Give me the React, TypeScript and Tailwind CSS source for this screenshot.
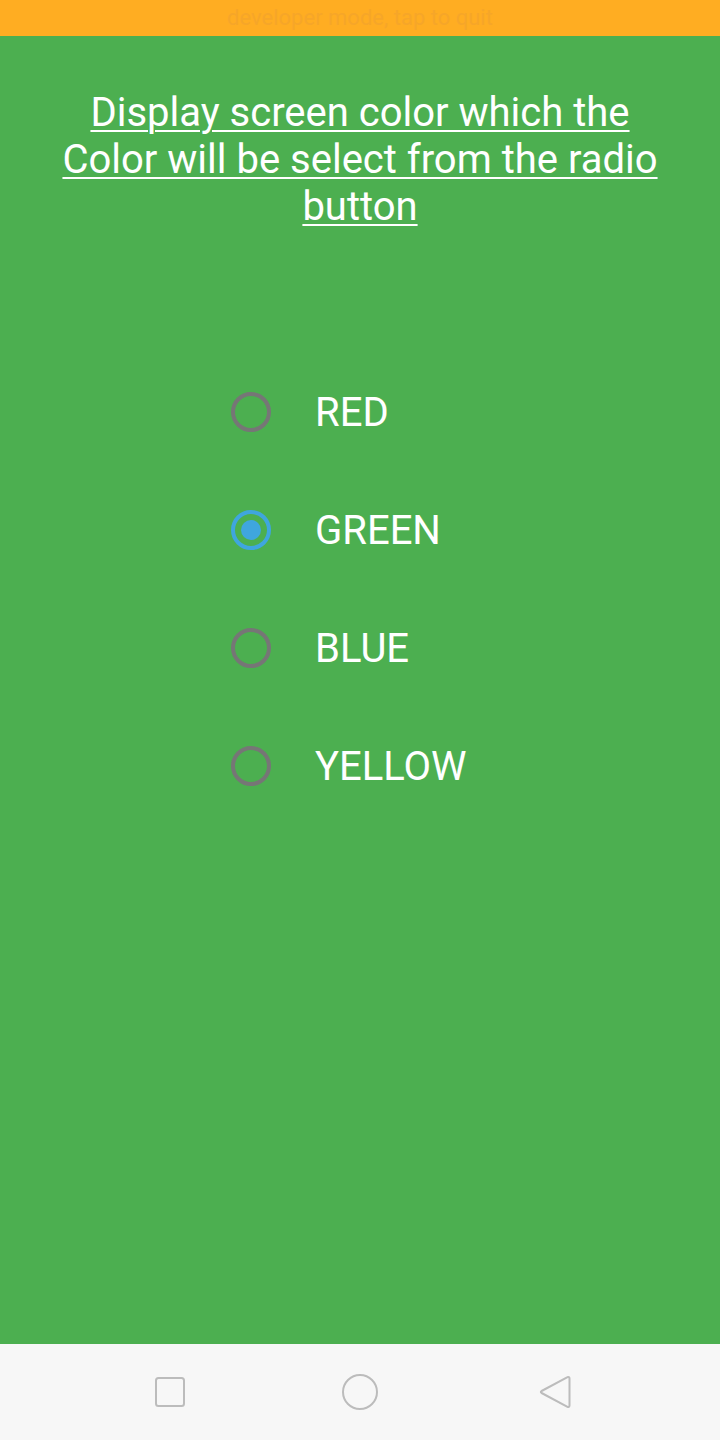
import { useState } from 'react'

const colors = ['RED', 'GREEN', 'BLUE', 'YELLOW']

export default function App() {
  const [selected, setSelected] = useState('GREEN')

  return (
    <div className="flex flex-col w-[720px] h-[1440px] bg-[#4caf50] font-['Roboto',sans-serif]">
      {/* Developer mode banner */}
      <div className="flex items-center justify-center h-[36px] bg-[#ffad22] text-[22px] leading-none text-[#f6a629]">
        developer mode, tap to quit
      </div>

      {/* Content */}
      <div className="flex-1 flex flex-col">
        <h1 className="mt-[53px] px-[40px] text-center text-[40px] leading-[47px] font-normal text-white underline decoration-2 underline-offset-[4px]">
          Display screen color which the Color will be select from the radio button
        </h1>

        <div className="mt-[123px] flex flex-col pl-[231px]">
          {colors.map((c) => (
            <button
              key={c}
              onClick={() => setSelected(c)}
              className="flex items-center h-[118px] text-left"
            >
              <span
                className={`flex items-center justify-center w-[40px] h-[40px] rounded-full border-[4px] ${
                  selected === c ? 'border-[#3fa6de]' : 'border-[#767676]'
                }`}
              >
                {selected === c && (
                  <span className="w-[20px] h-[20px] rounded-full bg-[#3fa6de]" />
                )}
              </span>
              <span className="ml-[44px] text-[40px] leading-[47px] text-white">{c}</span>
            </button>
          ))}
        </div>
      </div>

      {/* Navigation bar */}
      <div className="flex items-center h-[96px] bg-[#f7f7f7] pl-[155px]">
        <svg width="30" height="30" viewBox="0 0 30 30" fill="none">
          <rect x="1" y="1" width="28" height="28" rx="2.5" stroke="#bcbcbc" strokeWidth="2" />
        </svg>
        <svg className="ml-[157px]" width="36" height="36" viewBox="0 0 36 36" fill="none">
          <circle cx="18" cy="18" r="17" stroke="#bcbcbc" strokeWidth="2" />
        </svg>
        <svg className="ml-[161px]" width="32" height="36" viewBox="0 0 32 36" fill="none">
          <path
            d="M28.5 3.2 C29.5 2.6 30.5 3.2 30.5 4.4 L30.5 31.6 C30.5 32.8 29.5 33.4 28.5 32.8 L2.6 19 C1.6 18.4 1.6 17.6 2.6 17 Z"
            stroke="#bcbcbc"
            strokeWidth="2"
            strokeLinejoin="round"
          />
        </svg>
      </div>
    </div>
  )
}
